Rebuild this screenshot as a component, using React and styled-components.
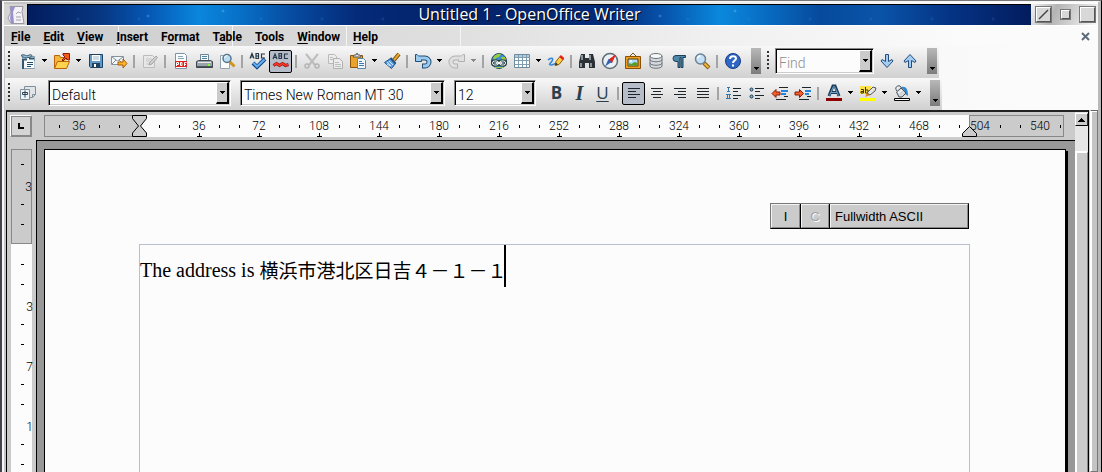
import React from "react";
import styled, { createGlobalStyle, css } from "styled-components";

const UI = `"Open Sans", "Noto Sans", sans-serif`;
const FIELD = `Roboto, "Liberation Sans", sans-serif`;

const GlobalStyle = createGlobalStyle`
  *, *::before, *::after { box-sizing: border-box; }
  html, body { margin: 0; height: 100%; overflow: hidden; }
  button, input, select { font: inherit; color: inherit; margin: 0; }
  svg { display: block; flex: none; }
`;

/* ---------- window frame ---------- */

const Frame = styled.div`
  display: flex;
  flex-direction: column;
  height: 100vh;
  overflow: hidden;
  background: #fbfbfb;
  border-left: 2px solid #45434e;
  border-right: 1px solid #000;
  border-top: 1px solid #777;
  font-family: ${UI};
  color: #000;
`;

const Inner = styled.div`
  flex: 1;
  min-height: 0;
  display: flex;
  flex-direction: column;
  border-left: 2px solid #f6f6f6;
  border-top: 1px solid #f6f6f6;
  border-right: 3px solid #b9b9b9;
  padding-top: 2px;
  background: linear-gradient(90deg, #c4c4c4, #fbfbfb 90%);
`;

const TitleBar = styled.header`
  display: flex;
  height: 22px;
  background: linear-gradient(90deg, #d4d4d4, #d4d4d4 94%, #fafafa);
  border-bottom: 1px solid #fff;
  padding-left: 3px;
`;

const AppIconBox = styled.div`
  width: 20px;
  display: flex;
  align-items: center;
`;

const Title = styled.h1`
  flex: 1;
  margin: 0;
  border-top: 1px solid #000;
  border-left: 1px solid #000;
  text-align: center;
  color: #fff;
  font-size: 16px;
  font-weight: 500;
  line-height: 19px;
  text-shadow: 1px 1px 0 #000;
  background:
    radial-gradient(circle at 120px 11px, rgba(90, 170, 240, 0.6) 0, transparent 2px) 0 0 / 512px 100%,
    radial-gradient(circle at 195px 6px, rgba(120, 200, 250, 0.5) 0, transparent 2px) 0 0 / 512px 100%,
    radial-gradient(circle at 50px 14px, rgba(60, 140, 220, 0.3) 0, transparent 2px) 0 0 / 61px 100%,
    linear-gradient(90deg, #031c5e 0, #06357f 7%, #0657b4 12%, #0a86dc 17%, #0871c8 21%,
      #06479c 27%, #042a78 33%, #04226a 42%, #042a78 58%, #0650a8 63%, #0a88dc 69%,
      #0870c6 73%, #064a9c 79%, #0a54a8 85%, #053384 92%, #031c5e 100%);
`;

const WindowButtons = styled.div`
  display: flex;
  align-items: center;
  gap: 8px;
  padding: 0 2px 0 4px;
  background: linear-gradient(115deg, #f4f4f4, #b4b4b4 35%, #fafafa);
`;

const WindowButton = styled.button`
  width: ${(p) => p.$size}px;
  height: ${(p) => p.$size}px;
  padding: 0;
  background: #d8d8d8;
  border: 2px solid;
  border-color: #fff #555 #555 #fff;
  outline: 1px solid #777;
  outline-offset: -1px;
`;

/* ---------- menu bar ---------- */

const MenuBar = styled.nav`
  display: flex;
  align-items: center;
  gap: 13px;
  height: 20px;
  padding: 0 8px 0 6px;
  margin-left: 1px;
  font-family: ${FIELD};
  font-size: 12px;
  font-weight: 700;
  background:
    repeating-linear-gradient(90deg, transparent 0 113px, #f4f4f4 113px 114px) 0 0 / 460px 100% no-repeat,
    linear-gradient(90deg, #cbcbcb, #e0e0e0 42%, #f0f0f0 65%, #fbfbfb 88%);
`;

const MenuItem = styled.button`
  padding: 2px 0 0;
  border: 0;
  background: none;
  line-height: 18px;
  u { text-underline-offset: 2px; }
`;

const CloseDoc = styled.button`
  margin-left: auto;
  padding: 0;
  border: 0;
  background: none;
`;

/* ---------- tool bars ---------- */

const ToolRow = styled.div`
  display: flex;
  height: 32px;
  margin-left: 1px;
  background: linear-gradient(90deg, #ececec, #f4f4f4 60%, #fbfbfb 95%);
`;

const ToolBar = styled.div`
  display: flex;
  align-items: center;
  padding: 0 2px 2px 0;
  background: linear-gradient(#f8f8f8, #e6e6e6 45%, #d0d0d0);
`;

const Grip = styled.span`
  width: 2px;
  height: 20px;
  margin: 0 6px 0 ${(p) => p.$lead || 3}px;
  background: repeating-linear-gradient(#333 0 2px, transparent 2px 4px);
`;

const ToolButton = styled.button`
  display: flex;
  align-items: center;
  justify-content: center;
  width: 23px;
  height: 23px;
  padding: 0;
  background: none;
  border: 1px solid transparent;
  ${(p) =>
    p.$on &&
    css`
      background: #b6bcc8;
      border-color: #000;
      border-radius: 2px;
    `}
`;

const DropButton = styled.button`
  display: flex;
  align-items: center;
  justify-content: center;
  width: 11px;
  height: 23px;
  padding: 0 0 2px;
  border: 0;
  background: none;
  color: ${(p) => (p.disabled ? "#888" : "#000")};
`;

const Separator = styled.span`
  width: 2px;
  height: 13px;
  margin: 0 3px;
  background: #a4a4a4;
`;

const Overflow = styled.button`
  display: flex;
  align-items: flex-end;
  justify-content: center;
  width: 10px;
  height: 26px;
  margin-left: ${(p) => p.$lead || 6}px;
  padding: 0 0 4px;
  border: 0;
  background: linear-gradient(#b8b8b8, #7c7c7c);
`;

const Combo = styled.div`
  display: flex;
  width: ${(p) => p.$width}px;
  height: 26px;
  margin-right: ${(p) => p.$after}px;
  padding: 1px;
  background: #fcfcfc;
  border: 1px solid;
  border-color: #888 #fff #fff #888;
  box-shadow: inset 1px 1px 0 #000, inset -1px -1px 0 #ccc;
  font-family: ${FIELD};
  font-size: 14px;
  font-weight: 300;
  select, input {
    flex: 1;
    min-width: 0;
    height: 26px;
    padding: 0 0 0 2px;
    border: 0;
    outline: 0;
    appearance: none;
    background: none;
  }
  input::placeholder { color: #909090; opacity: 1; }
`;

const ComboFace = styled.span`
  display: flex;
  align-items: center;
  justify-content: center;
  width: 13px;
  background: #cbcbcb;
  border: solid;
  border-width: 1px 2px 2px 1px;
  border-color: #fff #000 #000 #fff;
  pointer-events: none;
`;

/* ---------- editor ---------- */

const Workspace = styled.main`
  flex: 1;
  min-height: 0;
  display: flex;
  background: #cbcbcb;
  margin-left: 2px;
`;

const Editor = styled.section`
  flex: 1;
  min-width: 0;
  display: flex;
  flex-direction: column;
  border-top: 2px solid #222;
  border-left: 1px solid #000;
`;

const RulerRow = styled.div`
  display: flex;
  gap: 12px;
  height: 28px;
  padding: 3px 11px 3px 3px;
`;

const TabCorner = styled.button`
  width: 22px;
  padding: 5px;
  background: #d4d4d4;
  border: 1px solid;
  border-color: #fff #888 #888 #fff;
  outline: 1px solid #888;
  outline-offset: -2px;
`;

const Ruler = styled.div`
  flex: 1;
  min-width: 0;
  display: flex;
  position: relative;
  font-family: ${FIELD};
  font-size: 12px;
  font-weight: 300;
`;

const RulerPart = styled.div`
  display: flex;
  overflow: hidden;
  ${(p) =>
    p.$margin
      ? css`
          flex: none;
          width: 95px;
          padding-left: ${p.$inset}px;
          background: #cbcbcb;
          border: 1px solid #888;
        `
      : css`
          flex: 1;
          min-width: 0;
          padding: 1px 0 1px 10px;
          background: #fcfcfc;
        `}
`;

const RulerCell = styled.span`
  position: relative;
  flex: none;
  display: flex;
  align-items: center;
  justify-content: center;
  width: 20px;
  i { width: 1px; height: 3px; background: #000; }
`;

const TabStop = styled.b`
  position: absolute;
  left: 8px;
  bottom: -1px;
  width: 5px;
  height: 4px;
  border-bottom: 1px solid #000;
  background: linear-gradient(#000, #000) center / 1px 100% no-repeat;
`;

const Marker = styled.svg`
  position: absolute;
  bottom: 0;
  left: ${(p) => p.$left || "auto"};
  right: ${(p) => p.$right || "auto"};
`;

const Body = styled.div`
  flex: 1;
  min-height: 0;
  display: flex;
`;

const SideRuler = styled.div`
  flex: none;
  width: 29px;
  padding: 9px 4px 0;
  display: flex;
  flex-direction: column;
  font-family: ${FIELD};
  font-size: 12px;
  font-weight: 300;
`;

const SidePart = styled.div`
  ${(p) =>
    p.$margin
      ? css`
          flex: none;
          height: 95px;
          padding-top: 4px;
          background: #cbcbcb;
          border: 1px solid #888;
        `
      : css`
          flex: 1;
          min-height: 0;
          padding-top: 10px;
          background: #fcfcfc;
        `}
`;

const SideCell = styled.span`
  display: flex;
  align-items: center;
  justify-content: ${(p) => (p.$label ? "flex-end" : "center")};
  height: 20px;
  padding-top: ${(p) => (p.$label ? 5 : 0)}px;
  margin-right: -1px;
  i { width: 3px; height: 1px; background: #000; }
`;

const Canvas = styled.div`
  flex: 1;
  min-width: 0;
  display: flex;
  padding: 8px 7px 0;
  background: #989898;
  border-top: 1px solid #000;
  border-left: 1px solid #000;
`;

const Page = styled.article`
  flex: 1;
  min-width: 0;
  display: flex;
  flex-direction: column;
  margin-right: 2px;
  padding: 53px 95px 0 94px;
  background: #fcfcfc;
  border: 1px solid #000;
  border-bottom: 0;
  box-shadow: 2px 2px 0 #000;
`;

const InputStatus = styled.div`
  align-self: flex-end;
  display: flex;
  height: 26px;
  margin: 0 1px 15px 0;
  border: 1px solid;
  border-color: #777 #000 #000 #777;
  font-family: "Liberation Sans", sans-serif;
  font-size: 13px;
`;

const StatusCell = styled.button`
  width: ${(p) => p.$width}px;
  padding: 0 4px;
  text-align: ${(p) => p.$align || "center"};
  background: #cbcbcb;
  border: 1px solid;
  border-color: #f4f4f4 #888 #888 #f4f4f4;
  & + & { box-shadow: -1px 0 0 #000; margin-left: 1px; }
  &:disabled { color: #a4a4a4; text-shadow: 1px 1px 0 #fff; }
`;

const TextArea = styled.div`
  flex: 1;
  border: 1px solid #b9bfcc;
  border-bottom: 0;
`;

const Paragraph = styled.p`
  display: flex;
  align-items: center;
  margin: 0;
  height: 42px;
  padding-top: 8px;
  white-space: pre;
  font-family: "Liberation Serif", "Noto Sans CJK JP", serif;
  font-size: 20px;
  line-height: 32px;
`;

const Japanese = styled.span`
  font-family: "Noto Sans CJK JP", sans-serif;
  font-size: 19px;
`;

const Caret = styled.span`
  width: 2px;
  height: 42px;
  margin: -8px 0 0 -2px;
  background: #000;
`;

const ScrollBar = styled.div`
  width: 14px;
  display: flex;
  flex-direction: column;
  border-top: 2px solid #222;
  border-right: 1px solid #000;
  background: #e6e6e6;
`;

const ScrollUp = styled.button`
  display: flex;
  align-items: center;
  justify-content: center;
  height: 13px;
  margin: 1px 0 25px;
  padding: 0;
  background: #cbcbcb;
  border: 1px solid;
  border-color: #fff #333 #000 #fff;
`;

const ScrollThumb = styled.div`
  flex: 1;
  background: #cbcbcb;
  border: 1px solid;
  border-color: #fff #888 #000 #fff;
  border-width: 2px 1px 0 2px;
`;

const SideEdge = styled.div`
  width: 8px;
  margin-left: 1px;
  background: #c4c4c4;
  border: 1px solid;
  border-color: #666 #777 #777 #fff;
  box-shadow: inset 1px 1px 0 #fff;
`;

/* ---------- icons ---------- */

const Arrow = () => (
  <svg width="5" height="3" viewBox="0 0 5 3" shapeRendering="crispEdges">
    <path d="M0 0h5v1H4v1H3v1H2V2H1V1H0z" fill="currentColor" />
  </svg>
);

const Svg = ({ children, ...rest }) => (
  <svg width="18" height="18" viewBox="0 0 18 18" fill="none" aria-hidden="true" {...rest}>
    {children}
  </svg>
);

const glyphs = {
  newDoc: (
    <>
      <path d="M3.500 4.500h12v12h-12z" fill="#f4f8fa" stroke="#7d98ab" />
      <path d="M2 3.500c3-2 5 1 7 0s3-1 4 0c-1 2-3 2-4 2-2 1-5 0-7-2z" fill="#9cc0d6" stroke="#34576f" />
      <path d="M4 7v10M4 7.500h4M10 6.500h5" stroke="#34576f" strokeWidth="2" />
      <path d="M7.500 9h8v7h-8z" fill="#fff" />
      <path d="M8 10.500h6M8 12.500h6M8 14.500h4" stroke="#1f4f74" />
    </>
  ),
  open: (
    <>
      <path d="M1.500 16V3.500h5l1 2h6V8" fill="#f3b73a" stroke="#b9640a" />
      <path d="M1.500 16.500l3-7h12l-3 7z" fill="#ffd34d" stroke="#b9640a" />
      <path d="M9 8l3-3-2-2V1.500h6.500V8H15l-2-2-3 3z" fill="#f05a1c" stroke="#8c1d04" />
    </>
  ),
  save: (
    <>
      <path d="M2.500 2.500h13v13h-12l-1-1z" fill="#5f9ac8" stroke="#1d4263" />
      <path d="M5 3h8v6H5z" fill="#fff" />
      <path d="M6 5h6M6 7h6" stroke="#9db4c4" />
      <path d="M5 11h8v5H5z" fill="#24435c" />
      <path d="M7 12h2v3H7z" fill="#fff" />
    </>
  ),
  mail: (
    <>
      <path d="M1.500 4.500h12v8h-12z" fill="#f4f6f8" stroke="#8492a0" />
      <path d="M2 5l5.500 4L13 5M2 12l4-4M13 12L9 8" stroke="#8492a0" />
      <path d="M8 10h5V7l4 4.500-4 4.500v-3H8z" fill="#ffb52a" stroke="#a85c04" />
    </>
  ),
  edit: (
    <>
      <path d="M2.500 3.500h9l2 2v10h-11z" fill="#e8e8e8" stroke="#bcbcbc" />
      <path d="M5 7h6M5 9h4M5 12h3" stroke="#c4c4c4" />
      <path d="M8 13l1-3 6-6 1.500 1.500-5.500 6.500z" fill="#cfcfcf" stroke="#a6a6a6" />
    </>
  ),
  pdf: (
    <>
      <path d="M3.500 1.500h9l2 2v13h-11z" fill="#fbfcfd" stroke="#7d93a4" />
      <path d="M6 4.500h5M6 6.500h6" stroke="#8aa4b6" />
      <path d="M3 9h12v6H3z" fill="#e0201b" />
      <path d="M4.500 14v-3.500h2v2h-2M8.500 10.500v3h1.500v-3zM12.500 14v-3.500h2M12.500 12.500h1.500" stroke="#fff" />
    </>
  ),
  print: (
    <>
      <path d="M5.500 2.500h8v7h-8z" fill="#f2f8fc" stroke="#6b8496" />
      <path d="M7 4.500h5M7 6.500h5" stroke="#54839f" />
      <path d="M1.500 9.500l2-1h12l2 1v6h-16z" fill="#9ba2a8" stroke="#3d474f" />
      <path d="M3 10.500h13" stroke="#e5e8ea" />
      <path d="M13 13h2" stroke="#7dff3c" strokeWidth="2" />
      <path d="M2 14.500h15" stroke="#4b555c" />
    </>
  ),
  preview: (
    <>
      <path d="M2.500 3.500h9v13h-9z" fill="#f8fafb" stroke="#92a3b0" />
      <path d="M11.500 9.500l5 5" stroke="#d3941c" strokeWidth="3" />
      <circle cx="9" cy="6.500" r="4" fill="#bcdcf4" stroke="#54738b" strokeWidth="1.500" />
      <path d="M6.500 6a3 3 0 013-2.500" stroke="#fff" />
    </>
  ),
  spell: (
    <>
      <path d="M1 6.500l2-5 2 5M2 5h3M7 6.500v-5h2.500v5zM7 4h3M16 2h-3.500v4H16" stroke="#27394a" strokeWidth="1.200" />
      <path d="M4 11l4 4 8-8" stroke="#174a94" strokeWidth="4" />
      <path d="M4.500 11l3.500 3.500L15.500 7.500" stroke="#63b0f0" strokeWidth="2" />
    </>
  ),
  autospell: (
    <>
      <path d="M1 7l2-5 2 5M2 5.500h3M7 6.500v-5h2.500v5zM7 4h3M16 2h-3.500v4.500H16" stroke="#27394a" strokeWidth="1.200" />
      <path d="M1.500 13.500l3-2 3 2 3-2 3 2 3-1" stroke="#a3140c" strokeWidth="3" />
      <path d="M2 13l2.500-1.500 3 2 3-2 3 2 2.500-1" stroke="#fb3a2c" strokeWidth="1.500" />
    </>
  ),
  cut: (
    <>
      <path d="M3 2l9 11M15 2L6 13" stroke="#bdbdbd" strokeWidth="2" />
      <circle cx="4" cy="14" r="2" stroke="#b4b4b4" strokeWidth="1.500" />
      <circle cx="14" cy="14" r="2" stroke="#b4b4b4" strokeWidth="1.500" />
    </>
  ),
  copy: (
    <>
      <path d="M2.500 2.500h6l2 2v7h-8z" fill="#ececec" stroke="#bababa" />
      <path d="M7.500 6.500h6l3 3v7h-9z" fill="#ececec" stroke="#b0b0b0" />
      <path d="M9 10.500h4M9 12.500h6M9 14.500h6M4 5.500h3M4 7.500h3" stroke="#bdbdbd" />
    </>
  ),
  paste: (
    <>
      <path d="M1.500 3.500h12v12h-12z" fill="#e9a22c" stroke="#8c5408" />
      <path d="M4 5l1-2h2l1-2 1 2h2l1 2z" fill="#e4e4e4" stroke="#5a5a5a" />
      <path d="M8.500 6.500h6l2 2v8h-8z" fill="#f0f7fc" stroke="#5b86a6" />
      <path d="M10 9.500h3M10 11.500h5M10 13.500h5" stroke="#3f7ba6" />
    </>
  ),
  brush: (
    <>
      <path d="M11 8l5-6" stroke="#7a4c08" strokeWidth="4" />
      <path d="M11 8l5-6" stroke="#e8a62e" strokeWidth="2" />
      <path d="M1.500 10.500l6-4 5 5-4 5z" fill="#5aa2e4" stroke="#1d4d86" />
      <path d="M4 10l4 4M6 9l4 4M4 12l3 2" stroke="#cfe6fa" />
      <path d="M7.500 6l5 5.500" stroke="#24507f" strokeWidth="2" />
    </>
  ),
  undo: (
    <>
      <path d="M5 6h6a3.500 3.500 0 010 8H8" stroke="#1f4d77" strokeWidth="5" />
      <path d="M1.500 9.500V2.500H3L7.500 7v2.500z" fill="#9ccbee" stroke="#1f4d77" />
      <path d="M4 6h7a3.500 3.500 0 010 8H9" stroke="#9ccbee" strokeWidth="3" />
    </>
  ),
  redo: (
    <>
      <path d="M13 6H7a3.500 3.500 0 000 8h3" stroke="#b0b0b0" strokeWidth="5" />
      <path d="M16.500 9.500V2.500H15L10.500 7v2.500z" fill="#e0e0e0" stroke="#b0b0b0" />
      <path d="M14 6H7a3.500 3.500 0 000 8h2" stroke="#e0e0e0" strokeWidth="3" />
    </>
  ),
  globe: (
    <>
      <circle cx="9" cy="9" r="7.500" fill="#3b8fd0" stroke="#27495f" />
      <path d="M3 6c2-4 6-4.500 8-4l-2 3-3 1-1 2zM11 5l4 0 1 4-3 0z" fill="#9ccb3c" />
      <rect x="2.500" y="9" width="6" height="4" rx="2" fill="#c8d8d8" stroke="#203a3c" strokeWidth="3" />
      <rect x="9.500" y="9" width="6" height="4" rx="2" fill="#c8d8d8" stroke="#203a3c" strokeWidth="3" />
      <rect x="2.500" y="9" width="6" height="4" rx="2" stroke="#fff" />
      <rect x="9.500" y="9" width="6" height="4" rx="2" stroke="#fff" />
      <path d="M6 11h6" stroke="#fff" strokeWidth="1.500" />
      <path d="M5 15.500h8" stroke="#9ccb3c" />
    </>
  ),
  table: (
    <>
      <path d="M1.500 2.500h15v13h-15z" fill="#fff" stroke="#6b8ba0" />
      <path d="M2 3h14v2H2z" fill="#b4ccdc" />
      <path d="M2 5.500h15M2 8.500h15M2 12.500h15M5.500 3v12M9.500 3v12M13.500 3v12" stroke="#7f9cb0" />
    </>
  ),
  draw: (
    <>
      <path d="M1 8c3-3 6-2 4 1s-4 4-1 4 3-2 5-1" stroke="#2f86dc" strokeWidth="1.500" />
      <path d="M8 13.500l1-4 4-5 3.500 2.500-4.500 5.500z" fill="#ffd044" stroke="#8a5a0a" />
      <path d="M13 4l3.500 3" stroke="#e2231a" strokeWidth="2.500" />
      <path d="M8 13.500l1-3 2 2z" fill="#333" />
    </>
  ),
  find: (
    <>
      <path d="M3 2h4v4h4V2h4l2 8v6h-6v-5H7v5H1v-6z" fill="#2a3036" />
      <path d="M4 3v5M12 3v5M3 11v4M13 11v4" stroke="#a8b2ba" strokeWidth="1.500" />
    </>
  ),
  navigator: (
    <>
      <circle cx="9" cy="9" r="7.500" fill="#e9f1f6" stroke="#5e6b75" strokeWidth="1.500" />
      <path d="M14 3.500l-3.500 7.500-3-3z" fill="#e0231a" stroke="#e0231a" />
      <path d="M4 14.500l3.500-7.500 3 3z" fill="#2b66b4" />
    </>
  ),
  gallery: (
    <>
      <path d="M6 4l3-3 3 3" stroke="#7a5410" />
      <path d="M1.500 4.500h15v12h-15z" fill="#f0a020" stroke="#8a5004" />
      <path d="M4 7h10v7H4z" fill="#a8dcfa" stroke="#5a3c04" />
      <path d="M4.500 11l3 1 3-2 3 1v2.500h-9z" fill="#5c9a24" />
      <circle cx="7" cy="9" r="1" fill="#fff" />
    </>
  ),
  database: (
    <>
      <path d="M3 4v10c0 3 12 3 12 0V4z" fill="#d6dade" stroke="#6c747a" />
      <ellipse cx="9" cy="4" rx="6" ry="2.500" fill="#f6f8f9" stroke="#6c747a" />
      <path d="M3 7.500c0 3 12 3 12 0M3 11c0 3 12 3 12 0" stroke="#6c747a" />
    </>
  ),
  marks: (
    <path d="M15.500 3.500H6a3 3 0 000 6h2v6h2v-10h1v10h2v-10h2.500z" fill="#4f87aa" stroke="#1d4059" />
  ),
  zoom: (
    <>
      <path d="M11 11l5 5" stroke="#8a5c0c" strokeWidth="4" />
      <path d="M11.500 11.500l4 4" stroke="#f0b83c" strokeWidth="2" />
      <circle cx="7.500" cy="7" r="5" fill="#c4e0f6" stroke="#6c8293" strokeWidth="1.500" />
      <path d="M4.500 6.500a3 3 0 013-2.500" stroke="#fff" strokeWidth="1.500" />
    </>
  ),
  help: (
    <>
      <circle cx="9" cy="9" r="7.500" fill="#2f66c4" stroke="#153a86" />
      <path d="M6 7c0-4 6-3.500 6-.5 0 2-3 2-3 4.500" stroke="#fff" strokeWidth="2" />
      <path d="M8 12.500h2v2H8z" fill="#fff" />
    </>
  ),
  down: <path d="M7.500 2.500h3v7L14 7.500 15 9l-6 6.500L3 9l1-1.500 3.500 2z" fill="#a4cdf4" stroke="#254c7c" />,
  up: <path d="M7.500 15.500h3v-7l3.500 2L15 9 9 2.500 3 9l1 1.500 3.500-2z" fill="#a4cdf4" stroke="#254c7c" />,
  styles: (
    <>
      <path d="M5.500 2.500h11v8l-3 3h-8z" fill="#dfe5e9" stroke="#7e909c" />
      <path d="M1.500 5.500h9v10h-9z" fill="#eef1f3" stroke="#7e909c" />
      <path d="M3.500 8.500h5v2h-5zM6 6.500v7" stroke="#2d4454" />
      <path d="M13.500 13.500v-3h3" stroke="#7e909c" />
    </>
  ),
  left: <path d="M3 4.500h12M3 7.500h8M3 10.500h12M3 13.500h8" stroke="#1c252c" />,
  center: <path d="M3 4.500h12M5 7.500h8M3 10.500h12M5 13.500h8" stroke="#1c252c" />,
  right: <path d="M3 4.500h12M7 7.500h8M3 10.500h12M7 13.500h8" stroke="#1c252c" />,
  justify: <path d="M3 4.500h12M3 7.500h12M3 10.500h12M3 13.500h12" stroke="#1c252c" />,
  numbering: (
    <>
      <path d="M2 3.500h3M3.500 4v4M2 7.500h3M1 10.500h5M2.500 11v4M4.500 11v4M1 14.500h5" stroke="#3477a8" />
      <path d="M8 4.500h8M8 7.500h5M8 11.500h8M8 14.500h5" stroke="#1c252c" />
    </>
  ),
  bullets: (
    <>
      <circle cx="3.500" cy="5.500" r="1.500" fill="#7cb4dc" stroke="#17384f" />
      <circle cx="3.500" cy="12.500" r="1.500" fill="#7cb4dc" stroke="#17384f" />
      <path d="M7 4.500h9M7 7.500h5M7 11.500h9M7 14.500h5" stroke="#1c252c" />
    </>
  ),
  outdent: (
    <>
      <path d="M8 3.500h9M5 15.500h10M13 12.500h4" stroke="#1c252c" />
      <path d="M10 7h7M10 10h5" stroke="#2287dc" strokeWidth="2" />
      <path d="M1 9.500l4-4v2.500h4v3H5v2.500z" fill="#f0602c" stroke="#8c1d04" />
    </>
  ),
  indent: (
    <>
      <path d="M8 3.500h9M5 15.500h10M13 12.500h4" stroke="#1c252c" />
      <path d="M11 7h6M11 10h4" stroke="#2287dc" strokeWidth="2" />
      <path d="M9.500 9.500l-4-4v2.500H1v3h4.500v2.500z" fill="#f0602c" stroke="#8c1d04" />
    </>
  ),
  fontColor: (
    <>
      <path d="M4 12l4-10h2l4 10M6 8.500h6" stroke="#1d3c58" strokeWidth="3" />
      <path d="M4.500 11.500l4-9h1l4 9M6 8.500h6" stroke="#6ea4cc" />
      <path d="M1 14h16v3H1z" fill="#8c0000" />
    </>
  ),
  highlight: (
    <>
      <path d="M1 2h11v8H1z" fill="#ffe14a" />
      <path d="M2 5.500h2.500v3.500H2V7.500h2M6.500 3v6h2.500V6H6.500" stroke="#3d3200" />
      <path d="M6 13l2-4 3 2z" fill="#e08010" />
      <path d="M8 9l6-6 3 1-1 3-5 4z" fill="#e4e4e4" stroke="#565656" />
      <path d="M1 14h16v3H1z" fill="#ffff00" />
    </>
  ),
  fill: (
    <>
      <path d="M8 3c5-1 7 2 7 9l-3-2-1-4z" fill="#2f86cc" />
      <path d="M3.500 8l4.500-4 5 5-4 4H6z" fill="#d4d8dc" stroke="#4a545c" />
      <path d="M4 7c-3-3 0-6 3-5l3 4" stroke="#4a545c" />
      <path d="M5 9l4-3" stroke="#fff" />
      <path d="M1.500 14.500h15v2h-15z" fill="#fff" stroke="#000" />
    </>
  ),
};

const Icon = ({ name }) => <Svg>{glyphs[name]}</Svg>;

const Letter = styled.span`
  font-family: ${(p) => (p.$serif ? `"Liberation Serif", serif` : `"Open Sans", sans-serif`)};
  font-size: ${(p) => (p.$serif ? 20 : 17)}px;
  font-weight: ${(p) => (p.$line ? 500 : 700)};
  font-style: ${(p) => (p.$serif ? "italic" : "normal")};
  text-decoration: ${(p) => (p.$line ? "underline 1px" : "none")};
  text-underline-offset: 2px;
  line-height: 20px;
  color: #2b3f4d;
`;

/* ---------- data ---------- */

const menus = ["File", "Edit", "View", "Insert", "F|ormat", "T|able", "Tools", "Window", "Help"];

const standardTools = [
  ["newDoc", "New", "drop"], ["open", "Open", "drop"], ["save", "Save"], ["mail", "E-mail"], "|",
  ["edit", "Edit File"], "|",
  ["pdf", "Export as PDF"], ["print", "Print"], ["preview", "Page Preview"], "|",
  ["spell", "Spelling"], ["autospell", "AutoSpellcheck", "on"], "|",
  ["cut", "Cut"], ["copy", "Copy"], ["paste", "Paste", "drop"], ["brush", "Format Paintbrush"], "|",
  ["undo", "Undo", "drop"], ["redo", "Redo", "off"], "|",
  ["globe", "Hyperlink"], ["table", "Table", "drop"], ["draw", "Show Draw Functions"], "|",
  ["find", "Find & Replace"], ["navigator", "Navigator"], ["gallery", "Gallery"],
  ["database", "Data Sources"], ["marks", "Nonprinting Characters"], ["zoom", "Zoom"], "|",
  ["help", "Help"],
];

const paragraphTools = [
  "|", ["left", "Align Left", "on"], ["center", "Centered"], ["right", "Align Right"],
  ["justify", "Justified"], "|",
  ["numbering", "Numbering"], ["bullets", "Bullets"], ["outdent", "Decrease Indent"],
  ["indent", "Increase Indent"], "|",
  ["fontColor", "Font Color", "drop"], ["highlight", "Highlighting", "drop"],
  ["fill", "Background Color", "drop"],
];

const Tools = ({ items }) =>
  items.map((item, i) => {
    if (item === "|") return <Separator key={i} />;
    const [name, label, mode] = item;
    return (
      <React.Fragment key={i}>
        <ToolButton aria-label={label} $on={mode === "on"} disabled={mode === "off"}>
          <Icon name={name} />
        </ToolButton>
        {(mode === "drop" || mode === "off") && (
          <DropButton aria-label={`${label} options`} disabled={mode === "off"}>
            <Arrow />
          </DropButton>
        )}
      </React.Fragment>
    );
  });

const SelectBox = ({ label, value, width, after }) => (
  <Combo $width={width} $after={after}>
    <select aria-label={label} defaultValue={value}>
      <option>{value}</option>
    </select>
    <ComboFace>
      <Arrow />
    </ComboFace>
  </Combo>
);

const SelectSpacer = styled.span`
  width: 9px;
`;

const bodyCells = Array.from({ length: 41 }, (_, i) => ((i + 1) % 3 === 0 ? ((i + 1) / 3) * 36 : null));

const Cell = ({ value, tab }) => (
  <RulerCell>
    {value ? value : <i />}
    {value && tab ? <TabStop /> : null}
  </RulerCell>
);

const Side = ({ value }) => <SideCell $label={!!value}>{value || <i />}</SideCell>;

export default function App() {
  return (
    <Frame>
      <GlobalStyle />
      <Inner>
        <TitleBar>
          <AppIconBox>
            <svg width="18" height="20" viewBox="0 0 18 20" fill="none">
              <path d="M3 1.500h13l-1 5 2 12H4L1 13l3-6z" fill="#f4f2f6" stroke="#9a98a4" />
              <path d="M3 2h5l-2 5 1 11H4l-1-5 1-6z" fill="#9a90d0" />
              <path d="M9 9l2-2 3 1M9 12h5M9 15h5" stroke="#a4a2ac" />
            </svg>
          </AppIconBox>
          <Title>Untitled 1 - OpenOffice Writer</Title>
          <WindowButtons>
            <WindowButton $size={17} aria-label="Iconify">
              <svg width="13" height="13" viewBox="0 0 13 13">
                <path d="M2 11L11 2" stroke="#444" strokeWidth="1.500" />
              </svg>
            </WindowButton>
            <WindowButton $size={11} aria-label="Restore" />
            <WindowButton $size={17} aria-label="Maximize" />
          </WindowButtons>
        </TitleBar>

        <MenuBar>
          {menus.map((m) => {
            const [lead, rest] = m.includes("|") ? m.split("|") : ["", m];
            return (
              <MenuItem key={m}>
                {lead}
                <u>{rest[0]}</u>
                {rest.slice(1)}
              </MenuItem>
            );
          })}
          <CloseDoc aria-label="Close document">
            <svg width="9" height="9" viewBox="0 0 9 9">
              <path d="M1 1l7 7M8 1L1 8" stroke="#5d6c79" strokeWidth="2" />
            </svg>
          </CloseDoc>
        </MenuBar>

        <ToolRow>
          <ToolBar>
            <Grip />
            <Tools items={standardTools} />
            <Overflow aria-label="More" $lead={7}>
              <Arrow />
            </Overflow>
          </ToolBar>
          <ToolBar>
            <Grip $lead={4} />
            <Combo $width={99} $after={1}>
              <input aria-label="Find" placeholder="Find" />
              <ComboFace>
                <Arrow />
              </ComboFace>
            </Combo>
            <Tools items={[["down", "Find Next"], ["up", "Find Previous"]]} />
            <Overflow aria-label="More">
              <Arrow />
            </Overflow>
          </ToolBar>
        </ToolRow>

        <ToolRow>
          <ToolBar>
            <Grip />
            <Tools items={[["styles", "Styles and Formatting"]]} />
            <SelectSpacer />
            <SelectBox label="Apply Style" value="Default" width={183} after={9} />
            <SelectBox label="Font Name" value="Times New Roman MT 30" width={205} after={9} />
            <SelectBox label="Font Size" value="12" width={82} after={9} />
            <ToolButton aria-label="Bold">
              <Letter>B</Letter>
            </ToolButton>
            <ToolButton aria-label="Italic">
              <Letter $serif>I</Letter>
            </ToolButton>
            <ToolButton aria-label="Underline">
              <Letter $line>U</Letter>
            </ToolButton>
            <Tools items={paragraphTools} />
            <Overflow aria-label="More">
              <Arrow />
            </Overflow>
          </ToolBar>
        </ToolRow>

        <Workspace>
          <Editor>
            <RulerRow>
              <TabCorner aria-label="Tab type">
                <svg width="10" height="10" viewBox="0 0 10 10">
                  <path d="M3 2v5h5" stroke="#000" strokeWidth="2" fill="none" />
                </svg>
              </TabCorner>
              <Ruler>
                <RulerPart $margin $inset={4}>
                  <Cell />
                  <Cell value={36} />
                  <Cell />
                  <Cell />
                </RulerPart>
                <RulerPart>
                  {bodyCells.map((v, i) => (
                    <Cell key={i} value={v} tab />
                  ))}
                </RulerPart>
                <RulerPart $margin $inset={0}>
                  <Cell value={504} />
                  <Cell />
                  <Cell />
                  <Cell value={540} />
                  <Cell />
                </RulerPart>
                <Marker $left="88px" width="15" height="22" viewBox="0 0 15 22">
                  <path d="M.5.5h14v3L8.500 11l6 7v3.500H.5V18l6-7-6-7.500z" fill="#cbcbcb" stroke="#000" />
                </Marker>
                <Marker $right="87px" width="15" height="11" viewBox="0 0 15 11">
                  <path d="M7.500.5l7 7v3H.5v-3z" fill="#cbcbcb" stroke="#000" />
                </Marker>
              </Ruler>
            </RulerRow>
            <Body>
              <SideRuler>
                <SidePart $margin>
                  <Side />
                  <Side value="3" />
                  <Side />
                  <Side />
                </SidePart>
                <SidePart>
                  {[0, 0, "3", 0, 0, "7", 0, 0, "1", 0, 0].map((v, i) => (
                    <Side key={i} value={v} />
                  ))}
                </SidePart>
              </SideRuler>
              <Canvas>
                <Page>
                  <InputStatus>
                    <StatusCell $width={29}>I</StatusCell>
                    <StatusCell $width={28} disabled>
                      C
                    </StatusCell>
                    <StatusCell $width={138} $align="left">
                      Fullwidth ASCII
                    </StatusCell>
                  </InputStatus>
                  <TextArea>
                    <Paragraph>
                      {"The address is "}
                      <Japanese lang="ja">横浜市港北区日吉４－１－１</Japanese>
                      <Caret />
                    </Paragraph>
                  </TextArea>
                </Page>
              </Canvas>
            </Body>
          </Editor>
          <ScrollBar>
            <ScrollUp aria-label="Scroll up">
              <svg width="7" height="4" viewBox="0 0 7 4" shapeRendering="crispEdges">
                <path d="M3 0h1v1h1v1h1v1h1v1H0V3h1V2h1V1h1z" fill="#000" />
              </svg>
            </ScrollUp>
            <ScrollThumb />
          </ScrollBar>
          <SideEdge />
        </Workspace>
      </Inner>
    </Frame>
  );
}
